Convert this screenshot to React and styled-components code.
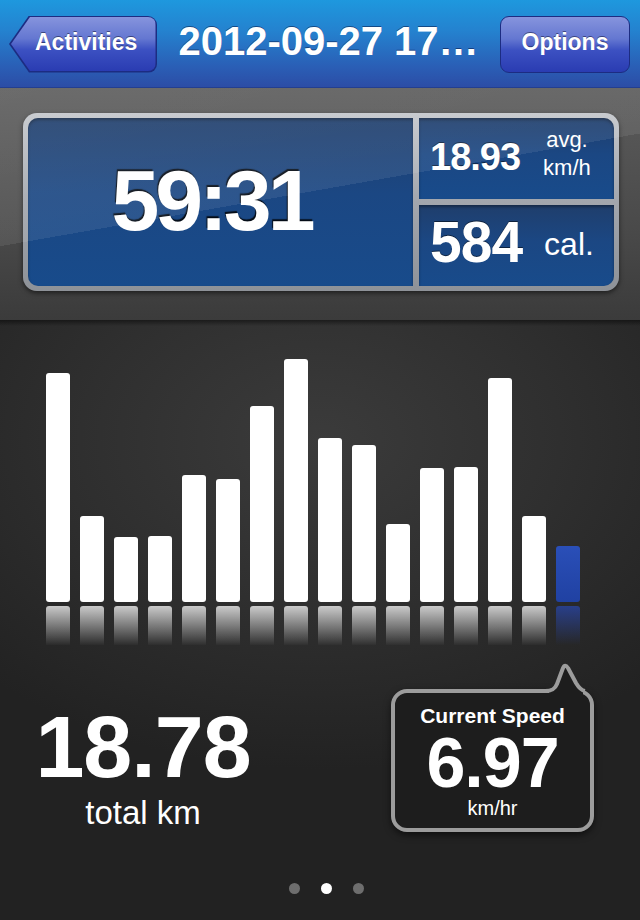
import React from "react";
import styled, { createGlobalStyle } from "styled-components";

const GlobalStyle = createGlobalStyle`
  html, body { margin: 0; padding: 0; background: #1e1e1e; }
  body { font-family: "Liberation Sans", Arial, Helvetica, sans-serif; overflow: hidden; }
  * { box-sizing: border-box; }
`;

const Screen = styled.div`
  width: 640px;
  height: 920px;
  display: flex;
  flex-direction: column;
  overflow: hidden;
  color: #fff;
`;

const NavBar = styled.header`
  height: 88px;
  flex: 0 0 88px;
  display: flex;
  align-items: center;
  padding: 0 10px 0 9px;
  background: linear-gradient(to bottom, #1e98de 0%, #2482cf 35%, #2a5fb6 75%, #2c4ca5 100%);
  box-shadow: inset 0 -1px 0 #233f90;
  position: relative;
  z-index: 2;
`;

const NavButton = styled.button`
  position: relative;
  height: 57px;
  border: 0;
  padding: 0 0 3px 0;
  background: transparent;
  display: flex;
  align-items: center;
  justify-content: center;
  font-family: inherit;
  font-size: 23px;
  font-weight: 700;
  color: #fff;
  text-shadow: 0 -1px 0 rgba(0, 0, 20, 0.45);
  cursor: pointer;
`;

const BackButton = styled(NavButton)`
  width: 148px;
  justify-content: flex-start;
  padding-left: 26px;
  padding-right: 0;
  background: #1c2c82;
  border-radius: 0 9px 9px 0;
  clip-path: polygon(20px 0, 100% 0, 100% 100%, 20px 100%, 0 50%);
  &::before {
    content: "";
    position: absolute;
    inset: 1.5px 1.5px 1.5px 2px;
    border-radius: 0 8px 8px 0;
    clip-path: polygon(19px 0, 100% 0, 100% 100%, 19px 100%, 0 50%);
    background: linear-gradient(to bottom, #8694dd 0%, #6477d1 40%, #3c51c2 60%, #2a3cb2 100%);
  }
`;

const OptionsButton = styled(NavButton)`
  width: 130px;
  border: 1.5px solid #1c2c82;
  border-radius: 9px;
  background: linear-gradient(to bottom, #8694dd 0%, #6477d1 40%, #3c51c2 60%, #2a3cb2 100%);
`;

const ButtonLabel = styled.span`
  position: relative;
  z-index: 1;
`;

const Title = styled.h1`
  flex: 1;
  margin: 0;
  padding-bottom: 6px;
  text-align: center;
  font-size: 40px;
  line-height: 1;
  font-weight: 700;
  white-space: nowrap;
  color: #fff;
  text-shadow: 0 -1px 0 rgba(0, 0, 40, 0.45);
`;

const SummarySection = styled.section`
  position: relative;
  flex: 0 0 232px;
  padding: 25px 0 0 23px;
  background: linear-gradient(to bottom, #5b5b5b 0%, #4a4a4a 60%, #3b3b3b 100%);
  &::after {
    content: "";
    position: absolute;
    inset: 0;
    pointer-events: none;
    background: linear-gradient(170deg, rgba(255, 255, 255, 0.1) 0%, rgba(255, 255, 255, 0.08) 45.9%, rgba(255, 255, 255, 0) 45.9%);
    z-index: 1;
  }
`;

const Panel = styled.div`
  width: 596px;
  height: 178px;
  padding: 5px;
  border-radius: 14px;
  background: linear-gradient(to bottom, #c3c6cb 0%, #a2a6ad 50%, #8e9298 100%);
  box-shadow: 0 2px 5px rgba(0, 0, 0, 0.55);
  display: grid;
  grid-template-columns: 385px 1fr;
  grid-template-rows: 81px 1fr;
  gap: 6px;
`;

const Cell = styled.div`
  background: linear-gradient(to bottom, #1f3e6c 0%, #1b4783 45%, #184b8b 100%);
  box-shadow: inset 0 2px 3px rgba(0, 0, 0, 0.35);
  border-radius: ${(p) => p.$radius};
  display: flex;
`;

const TimeCell = styled(Cell)`
  grid-row: 1 / span 2;
  align-items: center;
  justify-content: center;
  padding: 0 18px 4px 0;
`;

const TimeValue = styled.div`
  font-size: 86px;
  line-height: 1;
  font-weight: 700;
  letter-spacing: -4px;
  text-shadow: -1px -2px 1px rgba(0, 0, 0, 0.85);
`;

const StatCell = styled(Cell)`
  align-items: flex-start;
  padding-left: 11px;
`;

const StatValue = styled.div`
  font-size: ${(p) => p.$size}px;
  line-height: 1;
  font-weight: 700;
  letter-spacing: -1px;
  margin-top: ${(p) => p.$top}px;
  text-shadow: 0 -1px 0 rgba(0, 0, 0, 0.5);
`;

const StatUnit = styled.div`
  font-size: ${(p) => p.$size}px;
  line-height: ${(p) => p.$lh}px;
  margin-top: ${(p) => p.$top}px;
  margin-left: ${(p) => p.$left}px;
  text-align: center;
  font-weight: 400;
`;

const ChartSection = styled.section`
  flex: 1;
  display: flex;
  flex-direction: column;
  background:
    linear-gradient(to bottom, rgba(0, 0, 0, 0.45) 0px, rgba(0, 0, 0, 0) 6px),
    radial-gradient(ellipse 75% 55% at 50% 20%, #3b3b3b 0%, #2f2f2f 50%, #222 100%);
`;

const Chart = styled.div`
  margin-top: 20px;
  height: 305px;
  padding-left: 46px;
  display: flex;
  align-items: flex-end;
  gap: 10px;
`;

const BarColumn = styled.div`
  width: 24px;
  display: flex;
  flex-direction: column;
`;

const Bar = styled.div`
  width: 24px;
  border-radius: 3px;
  background: ${(p) => (p.$current ? "linear-gradient(to bottom, #2a4fb8, #2041a2)" : "#fff")};
`;

const Reflection = styled.div`
  margin-top: 4px;
  height: 39px;
  border-radius: 3px 3px 0 0;
  background: ${(p) =>
    p.$current
      ? "linear-gradient(to bottom, rgba(40, 70, 170, 0.75), rgba(40, 70, 170, 0))"
      : "linear-gradient(to bottom, rgba(255, 255, 255, 0.75), rgba(255, 255, 255, 0.02))"};
`;

const BottomRow = styled.div`
  display: flex;
  align-items: flex-start;
`;

const TotalBlock = styled.div`
  flex: 0 0 286px;
  margin-top: 58px;
  text-align: center;
`;

const TotalValue = styled.div`
  font-size: 88px;
  line-height: 88px;
  font-weight: 700;
  letter-spacing: -1px;
`;

const TotalLabel = styled.div`
  margin-top: 5px;
  font-size: 33px;
  line-height: 33px;
  font-weight: 400;
`;

const Bubble = styled.div`
  position: relative;
  margin: 44px 0 0 105px;
  width: 203px;
  padding: 11px 0 10px;
  border: 4px solid #9c9c9c;
  border-radius: 16px;
  background: #1d1d1d;
  box-shadow: 0 3px 7px rgba(0, 0, 0, 0.55);
  text-align: center;
`;

const BubbleTip = styled.svg`
  position: absolute;
  left: 150px;
  top: -32px;
  width: 50px;
  height: 36px;
  overflow: visible;
`;

const BubbleTitle = styled.div`
  font-size: 21px;
  line-height: 24px;
  font-weight: 700;
`;

const BubbleValue = styled.div`
  font-size: 70px;
  line-height: 70px;
  font-weight: 700;
  letter-spacing: -1px;
`;

const BubbleUnit = styled.div`
  font-size: 20px;
  line-height: 20px;
`;

const Pager = styled.div`
  margin-top: 51px;
  padding-left: 12px;
  display: flex;
  justify-content: center;
  gap: 21px;
`;

const Dot = styled.span`
  width: 11px;
  height: 11px;
  border-radius: 50%;
  background: ${(p) => (p.$active ? "#fff" : "#6e6e6e")};
`;

const bars = [229, 86, 65, 66, 127, 123, 196, 243, 164, 157, 78, 134, 135, 224, 86, 56];

export default function App() {
  return (
    <>
      <GlobalStyle />
      <Screen>
        <NavBar>
          <BackButton>
            <ButtonLabel>Activities</ButtonLabel>
          </BackButton>
          <Title>2012-09-27 17…</Title>
          <OptionsButton>
            <ButtonLabel>Options</ButtonLabel>
          </OptionsButton>
        </NavBar>

        <SummarySection>
          <Panel>
            <TimeCell $radius="10px 0 0 10px">
              <TimeValue>59:31</TimeValue>
            </TimeCell>
            <StatCell $radius="0 10px 0 0">
              <StatValue $size={38} $top={20}>18.93</StatValue>
              <StatUnit $size={22} $lh={28} $top={8} $left={23}>
                avg.
                <br />
                km/h
              </StatUnit>
            </StatCell>
            <StatCell $radius="0 0 10px 0">
              <StatValue $size={57} $top={9}>584</StatValue>
              <StatUnit $size={32} $lh={32} $top={23} $left={22}>
                cal.
              </StatUnit>
            </StatCell>
          </Panel>
        </SummarySection>

        <ChartSection>
          <Chart>
            {bars.map((h, i) => {
              const current = i === bars.length - 1;
              return (
                <BarColumn key={i}>
                  <Bar $current={current} style={{ height: `${h}px` }} />
                  <Reflection $current={current} />
                </BarColumn>
              );
            })}
          </Chart>

          <BottomRow>
            <TotalBlock>
              <TotalValue>18.78</TotalValue>
              <TotalLabel>total km</TotalLabel>
            </TotalBlock>
            <Bubble>
              <BubbleTip viewBox="0 0 50 36">
                <rect x="4" y="28" width="34" height="7" fill="#1d1d1d" />
                <path
                  d="M 0 30 C 7 30, 10 28, 12 23 L 18 7 Q 20 2.5 23 7 L 31 22 C 34 27, 37 29.5, 40 30"
                  fill="#1d1d1d"
                  stroke="#9c9c9c"
                  strokeWidth="4"
                  strokeLinejoin="round"
                />
              </BubbleTip>
              <BubbleTitle>Current Speed</BubbleTitle>
              <BubbleValue>6.97</BubbleValue>
              <BubbleUnit>km/hr</BubbleUnit>
            </Bubble>
          </BottomRow>

          <Pager>
            <Dot />
            <Dot $active />
            <Dot />
          </Pager>
        </ChartSection>
      </Screen>
    </>
  );
}
